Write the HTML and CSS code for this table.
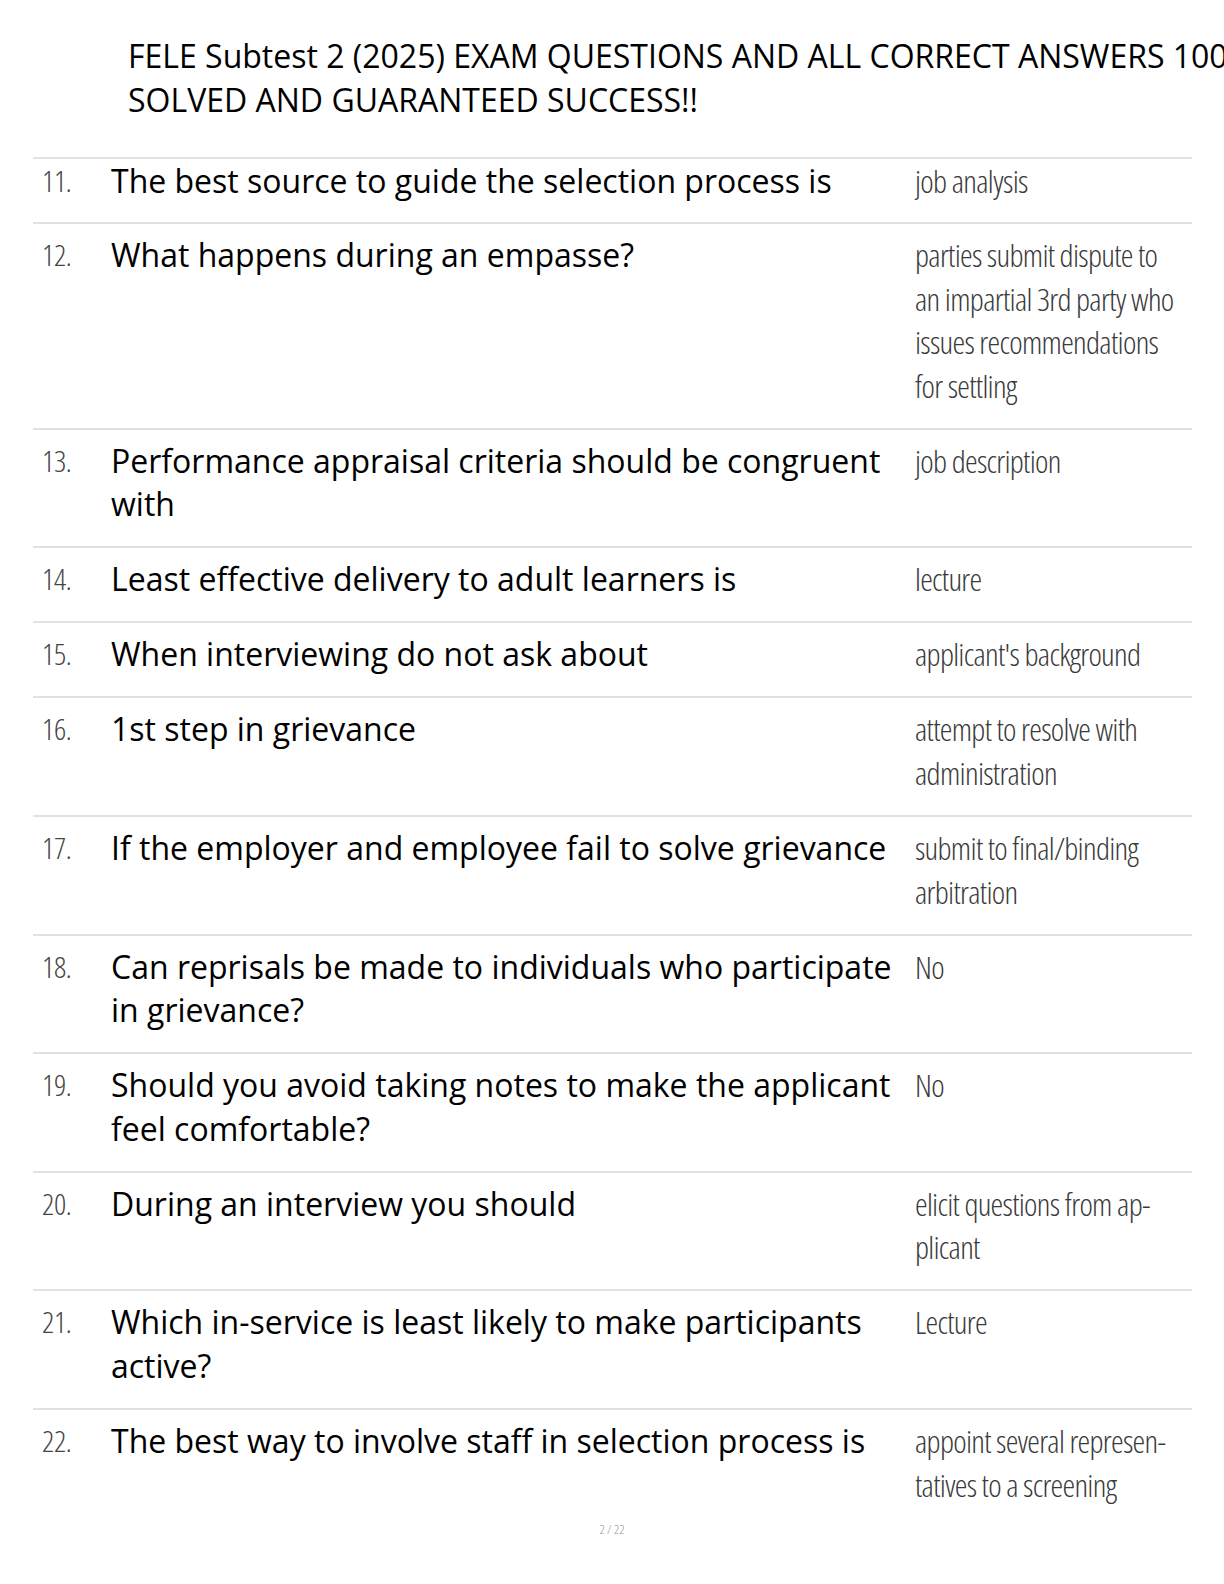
FILE: index.html
```html
<!DOCTYPE html>
<html lang="en">
<head>
<meta charset="utf-8">
<title>FELE Subtest 2</title>
<link rel="stylesheet" href="styles.css">
</head>
<body>
<header class="title">FELE Subtest 2 (2025) EXAM QUESTIONS AND ALL CORRECT ANSWERS 100%<br>SOLVED AND GUARANTEED SUCCESS!!</header>
<div class="qa-list">
  <div class="row first"><div class="num">11.</div><div class="q">The best source to guide the selection process is</div><div class="a">job analysis</div></div>
  <div class="row"><div class="num">12.</div><div class="q">What happens during an empasse?</div><div class="a">parties submit dispute to an impartial 3rd party who issues recommendations for settling</div></div>
  <div class="row"><div class="num">13.</div><div class="q">Performance appraisal criteria should be congruent with</div><div class="a">job description</div></div>
  <div class="row"><div class="num">14.</div><div class="q">Least effective delivery to adult learners is</div><div class="a">lecture</div></div>
  <div class="row"><div class="num">15.</div><div class="q">When interviewing do not ask about</div><div class="a">applicant's background</div></div>
  <div class="row"><div class="num">16.</div><div class="q">1st step in grievance</div><div class="a">attempt to resolve with administration</div></div>
  <div class="row"><div class="num">17.</div><div class="q">If the employer and employee fail to solve grievance</div><div class="a">submit to final/binding arbitration</div></div>
  <div class="row"><div class="num">18.</div><div class="q">Can reprisals be made to individuals who participate in grievance?</div><div class="a">No</div></div>
  <div class="row"><div class="num">19.</div><div class="q">Should you avoid taking notes to make the applicant feel comfortable?</div><div class="a">No</div></div>
  <div class="row"><div class="num">20.</div><div class="q">During an interview you should</div><div class="a">elicit questions from ap&shy;plicant</div></div>
  <div class="row"><div class="num">21.</div><div class="q">Which in-service is least likely to make participants active?</div><div class="a">Lecture</div></div>
  <div class="row last"><div class="num">22.</div><div class="q">The best way to involve staff in selection process is</div><div class="a">appoint several represen&shy;tatives to a screening</div></div>
</div>
<footer class="page-num">2 / 22</footer>
</body>
</html>
```
FILE: styles.css
```css
html, body {
  margin: 0;
  padding: 0;
  overflow: hidden;
  background: #ffffff;
}
body {
  width: 1224px;
  font-family: "Open Sans", "Noto Sans", sans-serif;
  color: #000;
}
.title {
  margin: 34px 0 0 128px;
  font-size: 32px;
  line-height: 43.5px;
  white-space: nowrap;
  color: #000;
}
.qa-list {
  margin: 36px 0 0 33px;
  width: 1159px;
}
.row {
  display: grid;
  grid-template-columns: 78px 798px 1fr;
  border-top: 2px solid #e0e0e8;
  padding: 9px 0 20.6px;
  line-height: 43.5px;
}
.row.first {
  padding-top: 0;
  padding-bottom: 19.6px;
}
.row.last {
  padding-bottom: 15px;
}
.num {
  padding-left: 9px;
  font-size: 30px;
  font-weight: 300;
  font-stretch: 75%;
  letter-spacing: -0.3px;
  color: #444;
}
.q {
  font-size: 32px;
  color: #000;
}
.a {
  padding: 0 10px 0 6px;
  font-size: 32px;
  font-weight: 300;
  font-stretch: 75%;
  letter-spacing: -0.7px;
  color: #3a3a3a;
}
.page-num {
  line-height: 16px;
  text-align: center;
  font-size: 13px;
  font-weight: 300;
  font-stretch: 75%;
  color: #999;
}
```
